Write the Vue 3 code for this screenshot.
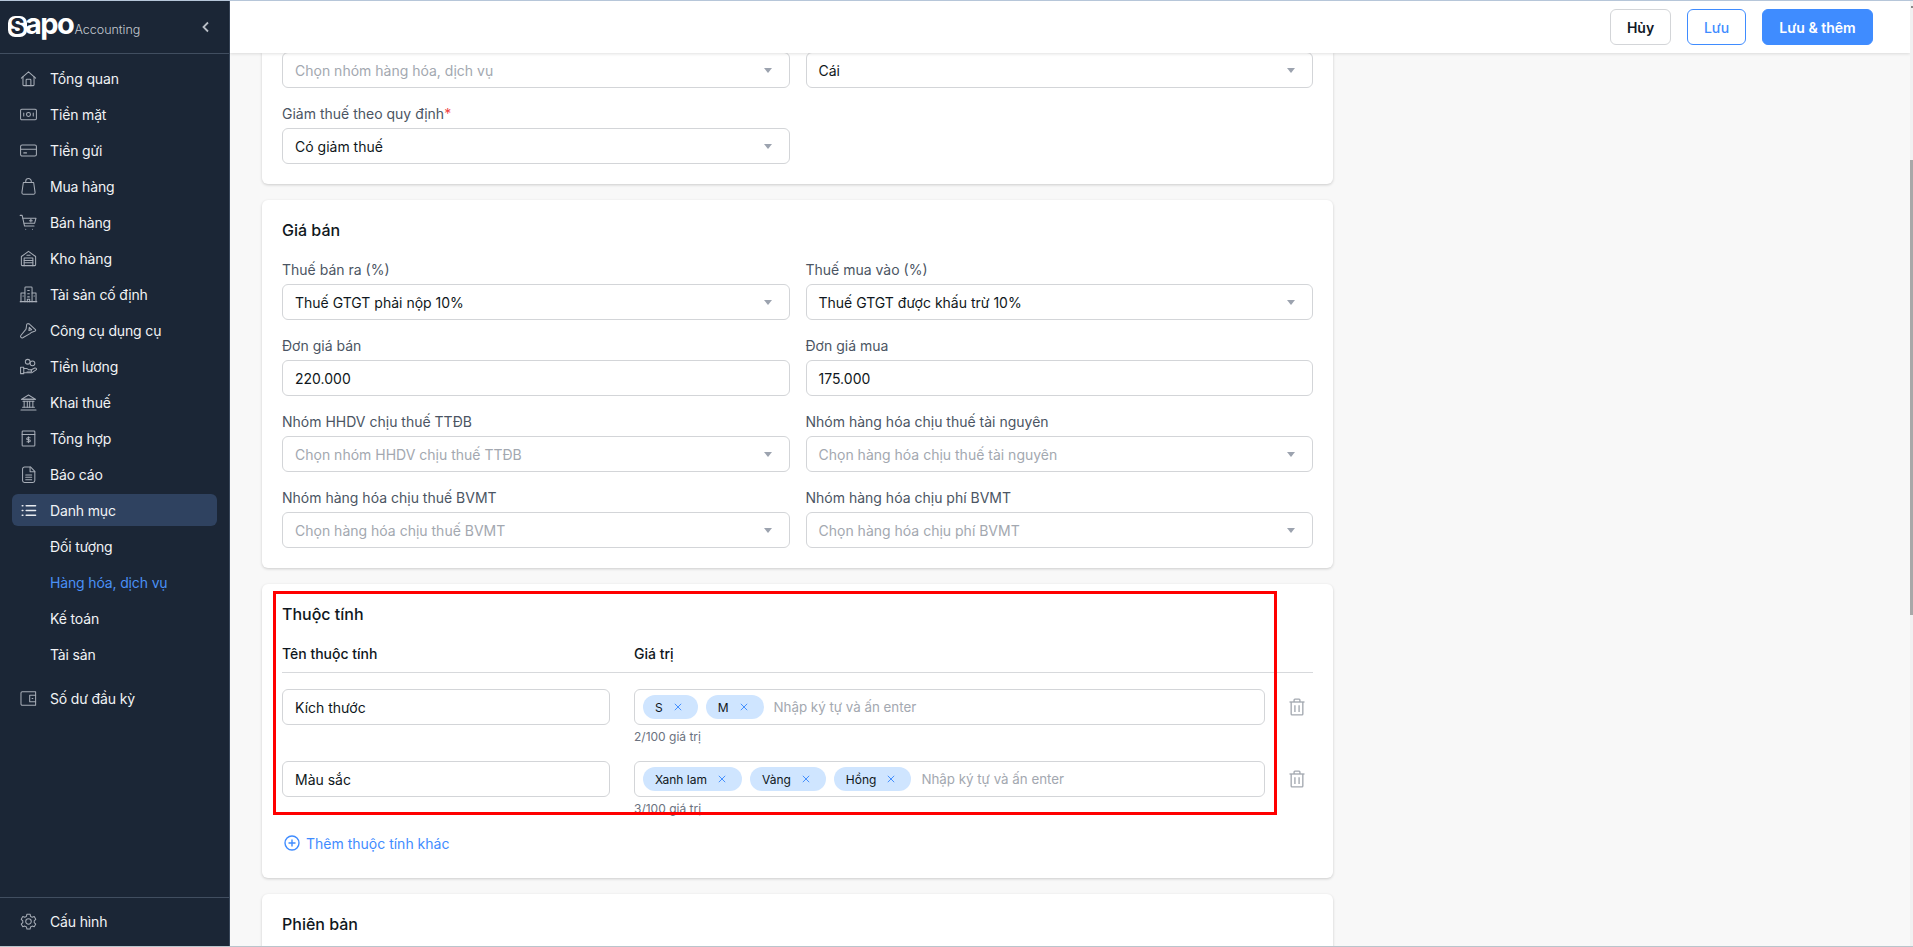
<script setup>
const menuTop = [
  { label: 'Tổng quan', paths: ['M3 11.5 12 3.5l9 8', 'M5 9.8V20a1 1 0 0 0 1 1h12a1 1 0 0 0 1-1V9.8', 'M9 21v-7a1 1 0 0 1 1-1h4a1 1 0 0 1 1 1v7'] },
  { label: 'Tiền mặt', paths: ['M3.5 5.5h17a1.5 1.5 0 0 1 1.5 1.5v10a1.5 1.5 0 0 1-1.5 1.5h-17A1.5 1.5 0 0 1 2 17V7a1.5 1.5 0 0 1 1.500-1.500z', 'M12 9.500a2.500 2.500 0 1 1 0 5 2.500 2.500 0 0 1 0-5z', 'M6 10v4', 'M18 10v4'] },
  { label: 'Tiền gửi', paths: ['M4 5h16a2 2 0 0 1 2 2v10a2 2 0 0 1-2 2H4a2 2 0 0 1-2-2V7a2 2 0 0 1 2-2z', 'M2 10.500h20', 'M6 15h3.500'] },
  { label: 'Mua hàng', paths: ['M5.500 7h13l1.800 12.500a2 2 0 0 1-2 2.300H5.700a2 2 0 0 1-2-2.300z', 'M8.500 7V5.500a3.500 3.500 0 0 1 7 0V7'] },
  { label: 'Bán hàng', paths: ['M1.500 3h2.500l3 13.500h12', 'M5 6.500h16.500l-1.800 6.500H6.500', 'M15 8v3.500', 'M13.200 9.800h3.600', 'M8.500 20.500h.01', 'M17 20.500h.01'] },
  { label: 'Kho hàng', paths: ['M3 9.500 12 3l9 6.500V20a1 1 0 0 1-1 1H4a1 1 0 0 1-1-1z', 'M6.500 21V11.500h11V21', 'M6.500 14.500h11', 'M6.500 17.500h11', 'M10 8h4'] },
  { label: 'Tài sản cố định', paths: ['M7.500 21V3.500a1 1 0 0 1 1-1h7a1 1 0 0 1 1 1V21', 'M7.500 10H2.500v11', 'M16.500 10h5v11', 'M1.500 21h21', 'M11 7h2', 'M11 11h2', 'M11 15h2', 'M5 14h.5', 'M19 14h.5', 'M10.500 21v-3h3v3'] },
  { label: 'Công cụ dụng cụ', paths: ['M12.500 3.200 20.800 11a1 1 0 0 1-.3 1.600l-5 2a2 2 0 0 0-1.100 1L4.800 21.200a2 2 0 0 1-2.300-.4 2 2 0 0 1-.2-2.500l6.300-7.700a2 2 0 0 0 .4-1l.7-5.100a1.400 1.400 0 0 1 2.300-.8z', 'M13 8l3 3-3.500 1z'] },
  { label: 'Tiền lương', paths: ['M2 13h4v8H2z', 'M6 14.500h3.500a3 3 0 0 1 2.500 1.500h2.500a1.500 1.500 0 0 1 0 3H10', 'M6 20h10l6-4a1.500 1.500 0 0 0-2-2l-5 2.500', 'M11 3a3 3 0 1 1 0 6 3 3 0 0 1 0-6z', 'M17 5a3 3 0 1 1 0 6 3 3 0 0 1 0-6z'] },
  { label: 'Khai thuế', paths: ['M12 2.500 21 8H3z', 'M3.500 8h17', 'M5 10.500h14', 'M6.500 10.500V18', 'M10.500 10.500V18', 'M13.500 10.500V18', 'M17.500 10.500V18', 'M4.500 18h15', 'M2.500 21.500h19'] },
  { label: 'Tổng hợp', paths: ['M5 2.500h14a1 1 0 0 1 1 1V20.500a1 1 0 0 1-1 1H5a1 1 0 0 1-1-1V3.500a1 1 0 0 1 1-1z', 'M4 7h16', 'M14 11H11a1.200 1.200 0 0 0 0 2.500h2a1.200 1.200 0 0 1 0 2.500H10', 'M12 9.800v7.400'] },
  { label: 'Báo cáo', paths: ['M7 2.500h7.500L20 8v11.500a2.500 2.500 0 0 1-2.500 2.500H7a2.500 2.500 0 0 1-2.500-2.500V5A2.500 2.500 0 0 1 7 2.500z', 'M14 2.500V8.500h6', 'M8.500 12.500h7.500', 'M8.500 15.500h7.500', 'M8.500 18.500h7.500'] },
];
const list = ['M9 6h12', 'M9 12h12', 'M9 18h12', 'M4 6h1', 'M4 12h1', 'M4 18h1'];
const subs = ['Đối tượng', 'Hàng hóa, dịch vụ', 'Kế toán', 'Tài sản'];
const wallet = ['M4 3.500h17v17H4a1.500 1.500 0 0 1-1.500-1.500V5A1.500 1.500 0 0 1 4 3.500z', 'M21 8h-7.500v8H21', 'M16.500 12h1'];
const gear = ['M10 2.800h4l.6 2.700 2 1.100 2.600-.8 2 3.400-2 1.900v2.200l2 1.900-2 3.400-2.600-.8-2 1.100-.6 2.700h-4l-.6-2.700-2-1.100-2.600.8-2-3.400 2-1.900v-2.200l-2-1.900 2-3.400 2.600.8 2-1.100z', 'M12 8.500a3.500 3.500 0 1 1 0 7 3.500 3.500 0 0 1 0-7z'];

const priceRows = [
  [
    { label: 'Thuế bán ra (%)', value: 'Thuế GTGT phải nộp 10%', select: true },
    { label: 'Thuế mua vào (%)', value: 'Thuế GTGT được khấu trừ 10%', select: true },
  ],
  [
    { label: 'Đơn giá bán', value: '220.000' },
    { label: 'Đơn giá mua', value: '175.000' },
  ],
  [
    { label: 'Nhóm HHDV chịu thuế TTĐB', placeholder: 'Chọn nhóm HHDV chịu thuế TTĐB', select: true },
    { label: 'Nhóm hàng hóa chịu thuế tài nguyên', placeholder: 'Chọn hàng hóa chịu thuế tài nguyên', select: true },
  ],
  [
    { label: 'Nhóm hàng hóa chịu thuế BVMT', placeholder: 'Chọn hàng hóa chịu thuế BVMT', select: true },
    { label: 'Nhóm hàng hóa chịu phí BVMT', placeholder: 'Chọn hàng hóa chịu phí BVMT', select: true },
  ],
];
const attrs = [
  { name: 'Kích thước', tags: ['S', 'M'], count: '2/100 giá trị' },
  { name: 'Màu sắc', tags: ['Xanh lam', 'Vàng', 'Hồng'], count: '3/100 giá trị' },
];
</script>

<template>
  <div class="app">
    <aside class="sidebar">
      <div class="brand">
        <div class="logo">
          <span class="logo-s">S</span><span class="logo-apo">apo</span><span class="logo-sub">Accounting</span>
        </div>
        <svg class="collapse" viewBox="0 0 10 12" width="10" height="12"><path d="M7 1.500 2.500 6 7 10.500" /></svg>
      </div>
      <nav class="menu">
        <a v-for="item in menuTop" :key="item.label" class="item">
          <svg class="ico" viewBox="0 0 24 24"><path v-for="d in item.paths" :key="d" :d="d" /></svg>
          <span>{{ item.label }}</span>
        </a>
        <a class="item active">
          <svg class="ico" viewBox="0 0 24 24"><path v-for="d in list" :key="d" :d="d" /></svg>
          <span>Danh mục</span>
        </a>
        <a v-for="(s, i) in subs" :key="s" class="item sub" :class="{ current: i === 1 }">{{ s }}</a>
        <a class="item last">
          <svg class="ico" viewBox="0 0 24 24"><path v-for="d in wallet" :key="d" :d="d" /></svg>
          <span>Số dư đầu kỳ</span>
        </a>
      </nav>
      <div class="foot">
        <a class="item">
          <svg class="ico" viewBox="0 0 24 24"><path v-for="d in gear" :key="d" :d="d" /></svg>
          <span>Cấu hình</span>
        </a>
      </div>
    </aside>

    <div class="main">
      <header class="topbar">
        <button class="btn ghost">Hủy</button>
        <button class="btn outline">Lưu</button>
        <button class="btn primary">Lưu &amp; thêm</button>
      </header>

      <div class="scroll">
        <section class="card cut">
          <div class="grid">
            <div class="field">
              <div class="control select placeholder">Chọn nhóm hàng hóa, dịch vụ<i class="caret"></i></div>
            </div>
            <div class="field">
              <div class="control select">Cái<i class="caret"></i></div>
            </div>
            <div class="field">
              <label class="lbl">Giảm thuế theo quy định<em>*</em></label>
              <div class="control select">Có giảm thuế<i class="caret"></i></div>
            </div>
          </div>
        </section>

        <section class="card">
          <h2 class="title">Giá bán</h2>
          <div class="grid">
            <template v-for="(row, r) in priceRows" :key="r">
              <div v-for="f in row" :key="f.label" class="field">
                <label class="lbl">{{ f.label }}</label>
                <div class="control" :class="{ select: f.select, placeholder: f.placeholder }">
                  {{ f.value || f.placeholder }}<i v-if="f.select" class="caret"></i>
                </div>
              </div>
            </template>
          </div>
        </section>

        <section class="card attr">
          <h2 class="title">Thuộc tính</h2>
          <div class="attr-head">
            <span>Tên thuộc tính</span>
            <span>Giá trị</span>
          </div>
          <div v-for="a in attrs" :key="a.name" class="attr-row">
            <div class="control">{{ a.name }}</div>
            <div class="attr-val">
              <div class="control tags">
                <span v-for="t in a.tags" :key="t" class="tag">
                  {{ t }}
                  <svg viewBox="0 0 10 10" width="8" height="8"><path d="M1 1l8 8M9 1l-8 8" /></svg>
                </span>
                <span class="hint">Nhập ký tự và ấn enter</span>
              </div>
              <div class="count">{{ a.count }}</div>
            </div>
            <svg class="trash" viewBox="0 0 24 24" width="20" height="20">
              <path d="M3 6h18" />
              <path d="M8.500 6V3.500a1 1 0 0 1 1-1h5a1 1 0 0 1 1 1V6" />
              <path d="M5 6v14.500a1 1 0 0 0 1 1h12a1 1 0 0 0 1-1V6" />
              <path d="M9.500 10v8M14.500 10v8" />
            </svg>
          </div>
          <a class="add">
            <svg viewBox="0 0 16 16" width="16" height="16">
              <circle cx="8" cy="8" r="7" />
              <path d="M8 4.500v7M4.500 8h7" />
            </svg>
            Thêm thuộc tính khác
          </a>
          <div class="mark"></div>
        </section>

        <section class="card">
          <h2 class="title">Phiên bản</h2>
        </section>
      </div>
      <div class="scrollbar"><i></i></div>
    </div>
  </div>
</template>

<style>
html, body { margin: 0; padding: 0; overflow: hidden; }
</style>

<style scoped>
* { box-sizing: border-box; }
.app {
  display: flex;
  height: 947px;
  overflow: hidden;
  border-top: 1px solid #b6c6d9;
  border-bottom: 1px solid #b9c5cc;
  font-family: Inter, "Noto Sans", sans-serif;
  font-size: 14px;
  color: #0f1720;
  background: #f8f8f8;
}
.sidebar {
  width: 230px;
  flex: none;
  display: flex;
  flex-direction: column;
  background: #1b2636;
  border-right: 1px solid #39475a;
}
.brand {
  height: 53px;
  flex: none;
  display: flex;
  align-items: center;
  justify-content: space-between;
  padding: 0 18px 0 8px;
  border-bottom: 1px solid #414e60;
}
.logo { display: flex; align-items: baseline; color: #fff; margin-top: -5px; }
.logo-s {
  width: 19px;
  height: 21px;
  background: #fff;
  color: #1b2636;
  border-radius: 7px;
  font: 800 21px/21px Inter, sans-serif;
  text-align: center;
}
.logo-apo { font: 700 29px/26px Inter, sans-serif; letter-spacing: -1.500px; margin-left: -2px; }
.logo-sub { font: 300 12.500px/16px Inter, sans-serif; color: #c4c9d0; margin-left: 1px; }
.collapse { fill: none; stroke: #b9bec6; stroke-width: 1.800; }
.menu { flex: 1; padding-top: 6px; }
.item {
  height: 36px;
  margin: 0 12px;
  padding-left: 7px;
  display: flex;
  align-items: center;
  gap: 12px;
  color: #f1f3f5;
  font-size: 14px;
  letter-spacing: -0.15px;
}
.ico {
  width: 19px;
  height: 19px;
  flex: none;
  fill: none;
  stroke: #a7adb7;
  stroke-width: 1.300;
  stroke-linecap: round;
  stroke-linejoin: round;
}
.active {
  height: 32px;
  margin-top: 2px;
  margin-bottom: 2px;
  background: #2f4260;
  border-radius: 6px;
}
.active .ico { stroke: #e8ebf0; stroke-width: 1.700; }
.sub { padding-left: 38px; }
.current { color: #4a90f5; }
.last { margin-top: 8px; }
.foot {
  height: 49px;
  flex: none;
  padding-top: 5px;
  border-top: 1px solid #414e60;
}
.main { flex: 1; position: relative; min-width: 0; display: flex; flex-direction: column; }
.topbar {
  height: 52px;
  flex: none;
  width: 1680px;
  position: relative;
  z-index: 2;
  display: flex;
  justify-content: flex-end;
  align-items: center;
  gap: 16px;
  padding: 0 37px 0 0;
  background: #fff;
  box-shadow: 0 1px 3px rgba(0, 0, 0, 0.12);
}
.btn {
  height: 36px;
  padding: 0;
  border-radius: 6px;
  font: 600 14px Inter, sans-serif;
  cursor: pointer;
}
.ghost { background: #fff; border: 1px solid #d3d5d8; color: #111827; width: 61px; }
.outline { background: #fff; border: 1px solid #3f8cff; color: #3f8cff; width: 59px; font-weight: 500; }
.primary { background: #3f8cff; border: 1px solid #3f8cff; color: #fff; width: 111px; }
.scroll {
  flex: 1;
  overflow: hidden;
  padding-left: 32px;
  margin-top: -1px;
}
.card {
  width: 1071px;
  padding: 20px;
  margin-bottom: 16px;
  background: #fff;
  border-radius: 6px;
  box-shadow: 0 1px 3px rgba(0, 0, 0, 0.18);
}
.cut { padding-top: 0; border-radius: 0 0 6px 6px; }
.title {
  margin: -1px 0 19px;
  font-size: 16px;
  line-height: 22px;
  font-weight: 500;
  color: #0f1720;
}
.grid { display: grid; grid-template-columns: 1fr 1fr; gap: 16px; }
.lbl { display: block; height: 20px; margin-bottom: 4px; line-height: 20px; color: #4b5563; }
.lbl em { color: #ef4444; font-style: normal; }
.control {
  position: relative;
  height: 36px;
  padding: 0 12px;
  display: flex;
  align-items: center;
  background: #fff;
  border: 1px solid #d3d5d8;
  border-radius: 6px;
  color: #0f1720;
}
.placeholder { color: #a3a8b0; }
.caret {
  position: absolute;
  right: 17px;
  top: 15px;
  border-left: 4.500px solid transparent;
  border-right: 4.500px solid transparent;
  border-top: 5px solid #9ca3af;
}
.attr { position: relative; height: 294px; }
.attr-head {
  display: grid;
  grid-template-columns: 328px 1fr;
  column-gap: 24px;
  height: 29px;
  border-bottom: 1px solid #d7d9dc;
  font-weight: 500;
  color: #0f1720;
  margin-bottom: 16px;
  line-height: 20px;
}
.attr-row {
  display: grid;
  grid-template-columns: 328px 631px 1fr;
  column-gap: 24px;
  height: 72px;
}
.attr-val { min-width: 0; }
.tags { gap: 8px; padding: 0 8px; }
.tag {
  height: 24px;
  display: inline-flex;
  align-items: center;
  gap: 11px;
  padding: 0 16px 0 12px;
  background: #cfe5ff;
  border-radius: 12px;
  color: #0f1720;
  font-size: 12px;
  white-space: nowrap;
}
.tag svg { fill: none; stroke: #3f8cff; stroke-width: 1.200; }
.hint { color: #a3a8b0; font-size: 13.333px; margin-left: 2px; }
.count { margin-top: 4px; font-size: 12px; line-height: 16px; color: #6b7280; }
.trash {
  margin: 8px 0 0 -2px;
  fill: none;
  stroke: #a3a8b0;
  stroke-width: 1.600;
}
.add {
  display: inline-flex;
  align-items: center;
  gap: 6px;
  height: 20px;
  color: #3f8cff;
  padding-left: 2px;
}
.add svg { fill: none; stroke: #3f8cff; stroke-width: 1.400; }
.mark {
  position: absolute;
  left: 11px;
  top: 7px;
  width: 1004px;
  height: 224px;
  border: 3px solid #ff0000;
  pointer-events: none;
}
.scrollbar {
  position: absolute;
  right: 0;
  top: 0;
  bottom: 0;
  width: 3px;
  background: #f1f1f1;
  z-index: 3;
}
.scrollbar::before {
  content: "";
  position: absolute;
  top: 5px;
  left: 1px;
  width: 2px;
  height: 2px;
  background: #8a8a8a;
}
.scrollbar i {
  position: absolute;
  top: 159px;
  left: 0;
  width: 3px;
  height: 455px;
  background: #a8a8a8;
}
</style>
